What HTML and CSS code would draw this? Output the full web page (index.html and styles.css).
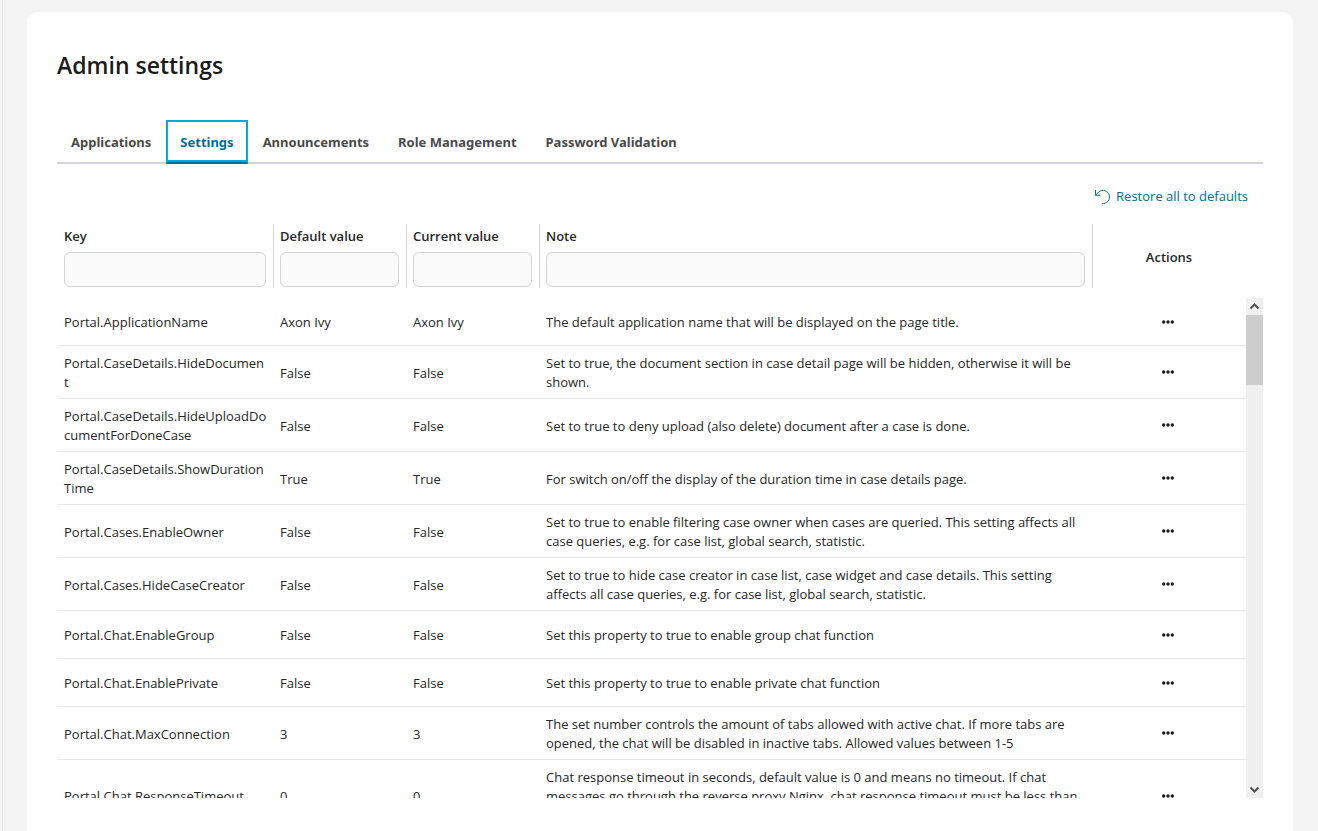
FILE: index.html
```html
<!DOCTYPE html>
<html lang="en">
<head>
    <meta charset="UTF-8">
    <meta name="viewport" content="width=device-width, initial-scale=1.0">
    <title>Admin settings</title>
    <link rel="stylesheet" href="styles.css">
</head>
<body>
    <svg class="sprite" aria-hidden="true">
        <symbol id="dots" viewBox="0 0 12 4">
            <circle cx="1.700" cy="2" r="1.700"/><circle cx="6" cy="2" r="1.700"/><circle cx="10.300" cy="2" r="1.700"/>
        </symbol>
    </svg>

    <main class="card">
        <h1 class="card-title">Admin settings</h1>

        <div class="tabs" role="tablist">
            <button class="tab" type="button" role="tab">Applications</button>
            <button class="tab active" type="button" role="tab" aria-selected="true">Settings</button>
            <button class="tab" type="button" role="tab">Announcements</button>
            <button class="tab" type="button" role="tab">Role Management</button>
            <button class="tab" type="button" role="tab">Password Validation</button>
        </div>

        <div class="toolbar">
            <a class="restore" href="#">
                <svg class="restore-icon" viewBox="0 0 16 16" aria-hidden="true">
                    <path d="M1.500 1v5.300h5M1.500 6.300L4.600 3A6.600 6.600 0 1 1 8 14.500"/>
                </svg>
                <span>Restore all to defaults</span>
            </a>
        </div>

        <div class="table-head">
            <table class="settings-table">
                <colgroup>
                    <col class="col-key"><col class="col-value"><col class="col-value"><col class="col-note"><col class="col-actions">
                </colgroup>
                <thead>
                    <tr>
                        <th><label for="filter-key">Key</label><input type="text" id="filter-key"></th>
                        <th><label for="filter-default">Default value</label><input type="text" id="filter-default"></th>
                        <th><label for="filter-current">Current value</label><input type="text" id="filter-current"></th>
                        <th><label for="filter-note">Note</label><input type="text" id="filter-note"></th>
                        <th class="actions">Actions</th>
                    </tr>
                </thead>
            </table>
        </div>

        <div class="table-body">
            <div class="table-scroll">
                <table class="settings-table">
                    <colgroup>
                        <col class="col-key"><col class="col-value"><col class="col-value"><col class="col-note"><col class="col-actions">
                    </colgroup>
                    <tbody>
                        <tr>
                            <td>Portal.ApplicationName</td>
                            <td>Axon Ivy</td>
                            <td>Axon Ivy</td>
                            <td>The default application name that will be displayed on the page title.</td>
                            <td class="actions"><button class="more" type="button" aria-label="More"><svg><use href="#dots"/></svg></button></td>
                        </tr>
                        <tr>
                            <td>Portal.CaseDetails.HideDocument</td>
                            <td>False</td>
                            <td>False</td>
                            <td>Set to true, the document section in case detail page will be hidden, otherwise it will be shown.</td>
                            <td class="actions"><button class="more" type="button" aria-label="More"><svg><use href="#dots"/></svg></button></td>
                        </tr>
                        <tr>
                            <td>Portal.CaseDetails.HideUploadDocumentForDoneCase</td>
                            <td>False</td>
                            <td>False</td>
                            <td>Set to true to deny upload (also delete) document after a case is done.</td>
                            <td class="actions"><button class="more" type="button" aria-label="More"><svg><use href="#dots"/></svg></button></td>
                        </tr>
                        <tr>
                            <td>Portal.CaseDetails.ShowDurationTime</td>
                            <td>True</td>
                            <td>True</td>
                            <td>For switch on/off the display of the duration time in case details page.</td>
                            <td class="actions"><button class="more" type="button" aria-label="More"><svg><use href="#dots"/></svg></button></td>
                        </tr>
                        <tr>
                            <td>Portal.Cases.EnableOwner</td>
                            <td>False</td>
                            <td>False</td>
                            <td>Set to true to enable filtering case owner when cases are queried. This setting affects all case queries, e.g. for case list, global search, statistic.</td>
                            <td class="actions"><button class="more" type="button" aria-label="More"><svg><use href="#dots"/></svg></button></td>
                        </tr>
                        <tr>
                            <td>Portal.Cases.HideCaseCreator</td>
                            <td>False</td>
                            <td>False</td>
                            <td>Set to true to hide case creator in case list, case widget and case details. This setting affects all case queries, e.g. for case list, global search, statistic.</td>
                            <td class="actions"><button class="more" type="button" aria-label="More"><svg><use href="#dots"/></svg></button></td>
                        </tr>
                        <tr>
                            <td>Portal.Chat.EnableGroup</td>
                            <td>False</td>
                            <td>False</td>
                            <td>Set this property to true to enable group chat function</td>
                            <td class="actions"><button class="more" type="button" aria-label="More"><svg><use href="#dots"/></svg></button></td>
                        </tr>
                        <tr>
                            <td>Portal.Chat.EnablePrivate</td>
                            <td>False</td>
                            <td>False</td>
                            <td>Set this property to true to enable private chat function</td>
                            <td class="actions"><button class="more" type="button" aria-label="More"><svg><use href="#dots"/></svg></button></td>
                        </tr>
                        <tr>
                            <td>Portal.Chat.MaxConnection</td>
                            <td>3</td>
                            <td>3</td>
                            <td>The set number controls the amount of tabs allowed with active chat. If more tabs are opened, the chat will be disabled in inactive tabs. Allowed values between 1-5</td>
                            <td class="actions"><button class="more" type="button" aria-label="More"><svg><use href="#dots"/></svg></button></td>
                        </tr>
                        <tr>
                            <td>Portal.Chat.ResponseTimeout</td>
                            <td>0</td>
                            <td>0</td>
                            <td>Chat response timeout in seconds, default value is 0 and means no timeout. If chat messages go through the reverse proxy Nginx, chat response timeout must be less than Nginx timeout.</td>
                            <td class="actions"><button class="more" type="button" aria-label="More"><svg><use href="#dots"/></svg></button></td>
                        </tr>
                    </tbody>
                </table>
            </div>
            <div class="scrollbar" aria-hidden="true">
                <svg class="scroll-arrow" viewBox="0 0 17 17"><path d="M4.500 10.500l4-4 4 4"/></svg>
                <div class="scroll-thumb"></div>
                <svg class="scroll-arrow scroll-down" viewBox="0 0 17 17"><path d="M4.500 6.500l4 4 4-4"/></svg>
            </div>
        </div>
    </main>
</body>
</html>
```
FILE: styles.css
```css
* {
    box-sizing: border-box;
}

html {
    background-color: #f3f3f3;
}

body {
    margin: 0 0 0 2px;
    padding: 12px 25px 0 24px;
    min-height: 100vh;
    display: flex;
    border-left: 1px solid #e9e9e9;
    font-family: "Segoe UI", "Open Sans", "Noto Sans", sans-serif;
    font-size: 13px;
    line-height: 19px;
    color: #262626;
}

.sprite {
    display: none;
}

.card {
    flex: 1;
    min-width: 0;
    padding: 36px 30px 33px;
    background-color: #fff;
    border-radius: 10px 10px 0 0;
}

.card-title {
    margin: 0 0 38px;
    font-size: 23px;
    line-height: 34px;
    font-weight: 600;
    color: #1b1b1c;
}

.tabs {
    display: flex;
    gap: 1px;
    border-bottom: 2px solid #d3d3db;
}

.tab {
    height: 44px;
    margin-bottom: -2px;
    padding: 0 12px;
    border: 2px solid transparent;
    background: none;
    font-family: "Segoe UI", "Noto Sans", sans-serif;
    font-size: 13px;
    font-weight: 700;
    color: #4a4a4a;
    cursor: pointer;
}

.tab.active {
    color: #006d94;
    border-color: #00a8dc;
    border-bottom-color: #006d94;
    box-shadow: inset 0 -2px #00a8dc;
}

.toolbar {
    display: flex;
    justify-content: flex-end;
    padding: 23px 15px 18px;
}

.restore {
    display: flex;
    align-items: center;
    gap: 6px;
    color: #006d94;
    text-decoration: none;
}

.restore-icon {
    width: 16px;
    height: 16px;
    fill: none;
    stroke: #006d94;
}

.table-head {
    padding-right: 17px;
    margin-bottom: 10px;
}

.settings-table {
    width: 100%;
    table-layout: fixed;
    border-collapse: separate;
    border-spacing: 0;
}

.col-key {
    width: 216px;
}

.col-value {
    width: 133px;
}

.col-actions {
    width: 154px;
}

th {
    height: 64px;
    padding: 3px 7px 0 6px;
    border-left: 1px solid #d3d3d8;
    text-align: left;
    vertical-align: top;
    font-weight: 600;
}

th:first-child {
    border-left-color: transparent;
}

th label {
    display: block;
    margin-bottom: 6px;
}

th input {
    display: block;
    width: 100%;
    height: 35px;
    padding: 0 8px;
    border: 1px solid #d3d3d8;
    border-radius: 6px;
    background-color: #fafafa;
    font: inherit;
}

td {
    height: 48px;
    padding: 8px 5px 6px 7px;
    border-bottom: 1px solid #e7e7e7;
    overflow-wrap: anywhere;
}

th.actions {
    vertical-align: middle;
}

.actions {
    text-align: center;
}

td.actions {
    padding: 7px 8px 7px 6px;
}

.table-body {
    display: flex;
    height: calc(100vh - 331px);
}

.table-scroll {
    flex: 1;
    overflow-y: auto;
    scrollbar-width: none;
}

.more {
    display: inline-flex;
    align-items: center;
    justify-content: center;
    width: 32px;
    height: 32px;
    padding: 0;
    border: 0;
    background: none;
    vertical-align: middle;
    cursor: pointer;
}

.more svg {
    width: 12px;
    height: 4px;
    fill: #1b1b1c;
}

.scrollbar {
    display: flex;
    flex-direction: column;
    width: 17px;
    background-color: #f0f0f0;
}

.scroll-arrow {
    width: 17px;
    height: 17px;
    fill: none;
    stroke: #505050;
    stroke-width: 2;
}

.scroll-thumb {
    height: 70px;
    background-color: #cdcdcd;
}

.scroll-down {
    margin-top: auto;
}
```
